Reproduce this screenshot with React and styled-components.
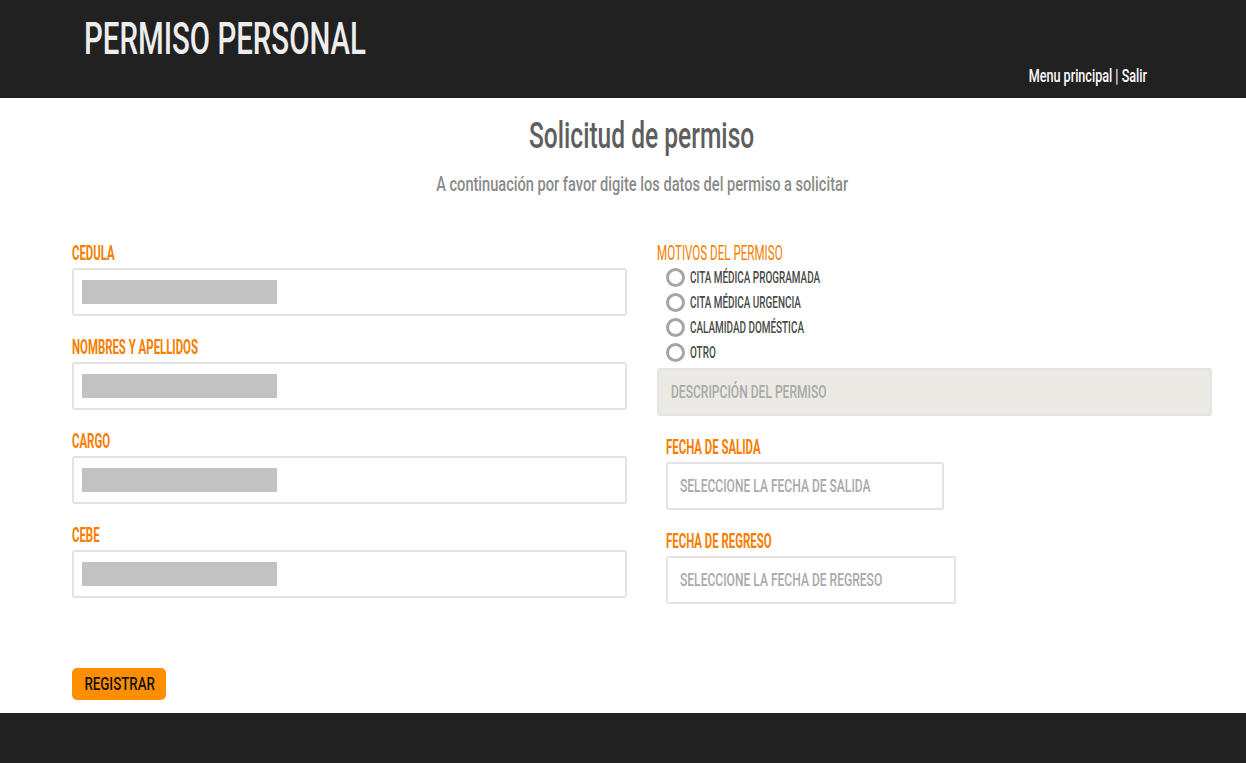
import styled, { createGlobalStyle, css } from 'styled-components';

const GlobalStyle = createGlobalStyle`
  html, body {
    margin: 0;
    padding: 0;
    background: #ffffff;
    font-family: Roboto, "Liberation Sans", sans-serif;
  }
  * { box-sizing: border-box; }
`;

// Oswald is not available, so Roboto is narrowed horizontally to get a condensed look
const narrow = (x, origin = 'left') => css`
  display: inline-block;
  white-space: nowrap;
  transform: scaleX(${x});
  transform-origin: ${origin} center;
`;

const Header = styled.header`
  height: 98px;
  background: #212121;
  padding: 0 99px 0 84px;
  display: flex;
  justify-content: space-between;
`;

const Brand = styled.h1`
  ${narrow(0.654)}
  margin: 16px 0 0;
  height: 45px;
  font-size: 45px;
  line-height: 45px;
  font-weight: 500;
  color: #ededed;
`;

const NavLinks = styled.nav`
  ${narrow(0.7, 'right')}
  align-self: flex-end;
  margin-bottom: 13px;
  font-size: 18px;
  line-height: 18px;
  font-weight: 500;
  color: #ffffff;
`;

const Main = styled.main`
  padding: 19px 34px 13px 72px;
`;

const TitleWrap = styled.div`
  text-align: center;
`;

const Title = styled.h2`
  ${narrow(0.664, 'center')}
  margin: 0;
  font-size: 37px;
  line-height: 37px;
  font-weight: 500;
  color: #5e5e5e;
`;

const Subtitle = styled.p`
  ${narrow(0.73, 'center')}
  margin: 20px 0 0;
  font-size: 20px;
  line-height: 20px;
  font-weight: 500;
  color: #8a8a8a;
`;

const FormGrid = styled.div`
  display: grid;
  grid-template-columns: 555px 555px;
  column-gap: 30px;
  margin-top: 48px;
`;

const Column = styled.div`
  display: flex;
  flex-direction: column;
  align-items: flex-start;
`;

const Field = styled.div`
  display: flex;
  flex-direction: column;
  align-items: flex-start;
  gap: 5px;
  margin-bottom: 21px;
  padding-left: ${p => p.$indent || 0}px;
  width: 100%;
`;

const Label = styled.label`
  ${p => narrow(p.$light ? 0.58 : 0.57)}
  font-size: 20px;
  line-height: 20px;
  font-weight: ${p => (p.$light ? 400 : 700)};
  color: #f57d00;
`;

const InputBox = styled.div`
  height: 48px;
  width: ${p => p.$width || '100%'};
  border: 2px solid #e3e3e3;
  border-radius: 3px;
  background: ${p => p.$fill || '#fff'};
  display: flex;
  align-items: center;
  padding: 0 12px 0 ${p => p.$padLeft || 8}px;
  overflow: hidden;
`;

const Placeholder = styled.span`
  ${narrow(0.67)}
  font-size: 18px;
  line-height: 18px;
  font-weight: 500;
  color: #a9a9a9;
`;

const Redacted = styled.span`
  width: 195px;
  height: 24px;
  background: #c2c2c2;
`;

const RadioList = styled.div`
  display: flex;
  flex-direction: column;
  padding-left: 9px;
  margin: 2px 0 3px;
`;

const RadioRow = styled.div`
  display: flex;
  align-items: center;
  gap: 5px;
  height: 25px;
`;

const RadioCircle = styled.span`
  width: 19px;
  height: 19px;
  border-radius: 50%;
  border: 3px solid #a5a5a5;
  background: #fff;
`;

const RadioText = styled.span`
  ${narrow(0.62)}
  font-size: 16px;
  line-height: 16px;
  font-weight: 500;
  color: #4a4a4a;
`;

const Button = styled.button`
  margin-top: 43px;
  width: 94px;
  height: 32px;
  padding: 0;
  background: #ff8f00;
  border: none;
  border-radius: 5px;
  font-family: inherit;
  cursor: pointer;
`;

const ButtonText = styled.span`
  ${narrow(0.74, 'center')}
  font-size: 18px;
  line-height: 18px;
  font-weight: 500;
  color: #111111;
`;

const Footer = styled.footer`
  height: 50px;
  background: #212121;
`;

const leftFields = ['CEDULA', 'NOMBRES Y APELLIDOS', 'CARGO', 'CEBE'];
const motivos = ['CITA MÉDICA PROGRAMADA', 'CITA MÉDICA URGENCIA', 'CALAMIDAD DOMÉSTICA', 'OTRO'];
const fechas = [
  { label: 'FECHA DE SALIDA', placeholder: 'SELECCIONE LA FECHA DE SALIDA', width: '278px' },
  { label: 'FECHA DE REGRESO', placeholder: 'SELECCIONE LA FECHA DE REGRESO', width: '290px' },
];

const App = () => (
  <>
    <GlobalStyle />
    <Header>
      <Brand>PERMISO PERSONAL</Brand>
      <NavLinks>Menu principal | Salir</NavLinks>
    </Header>
    <Main>
      <TitleWrap>
        <Title>Solicitud de permiso</Title>
      </TitleWrap>
      <TitleWrap>
        <Subtitle>A continuación por favor digite los datos del permiso a solicitar</Subtitle>
      </TitleWrap>
      <FormGrid>
        <Column>
          {leftFields.map(name => (
            <Field key={name}>
              <Label>{name}</Label>
              <InputBox>
                <Redacted />
              </InputBox>
            </Field>
          ))}
        </Column>
        <Column>
          <Label $light>MOTIVOS DEL PERMISO</Label>
          <RadioList>
            {motivos.map(m => (
              <RadioRow key={m}>
                <RadioCircle />
                <RadioText>{m}</RadioText>
              </RadioRow>
            ))}
          </RadioList>
          <InputBox $fill="#eae9e3" $padLeft={12}>
            <Placeholder>DESCRIPCIÓN DEL PERMISO</Placeholder>
          </InputBox>
          {fechas.map((f, i) => (
            <Field key={f.label} $indent={9} style={i === 0 ? { marginTop: 21 } : undefined}>
              <Label>{f.label}</Label>
              <InputBox $width={f.width} $padLeft={12}>
                <Placeholder>{f.placeholder}</Placeholder>
              </InputBox>
            </Field>
          ))}
        </Column>
      </FormGrid>
      <Button>
        <ButtonText>REGISTRAR</ButtonText>
      </Button>
    </Main>
    <Footer />
  </>
);

export default App;
